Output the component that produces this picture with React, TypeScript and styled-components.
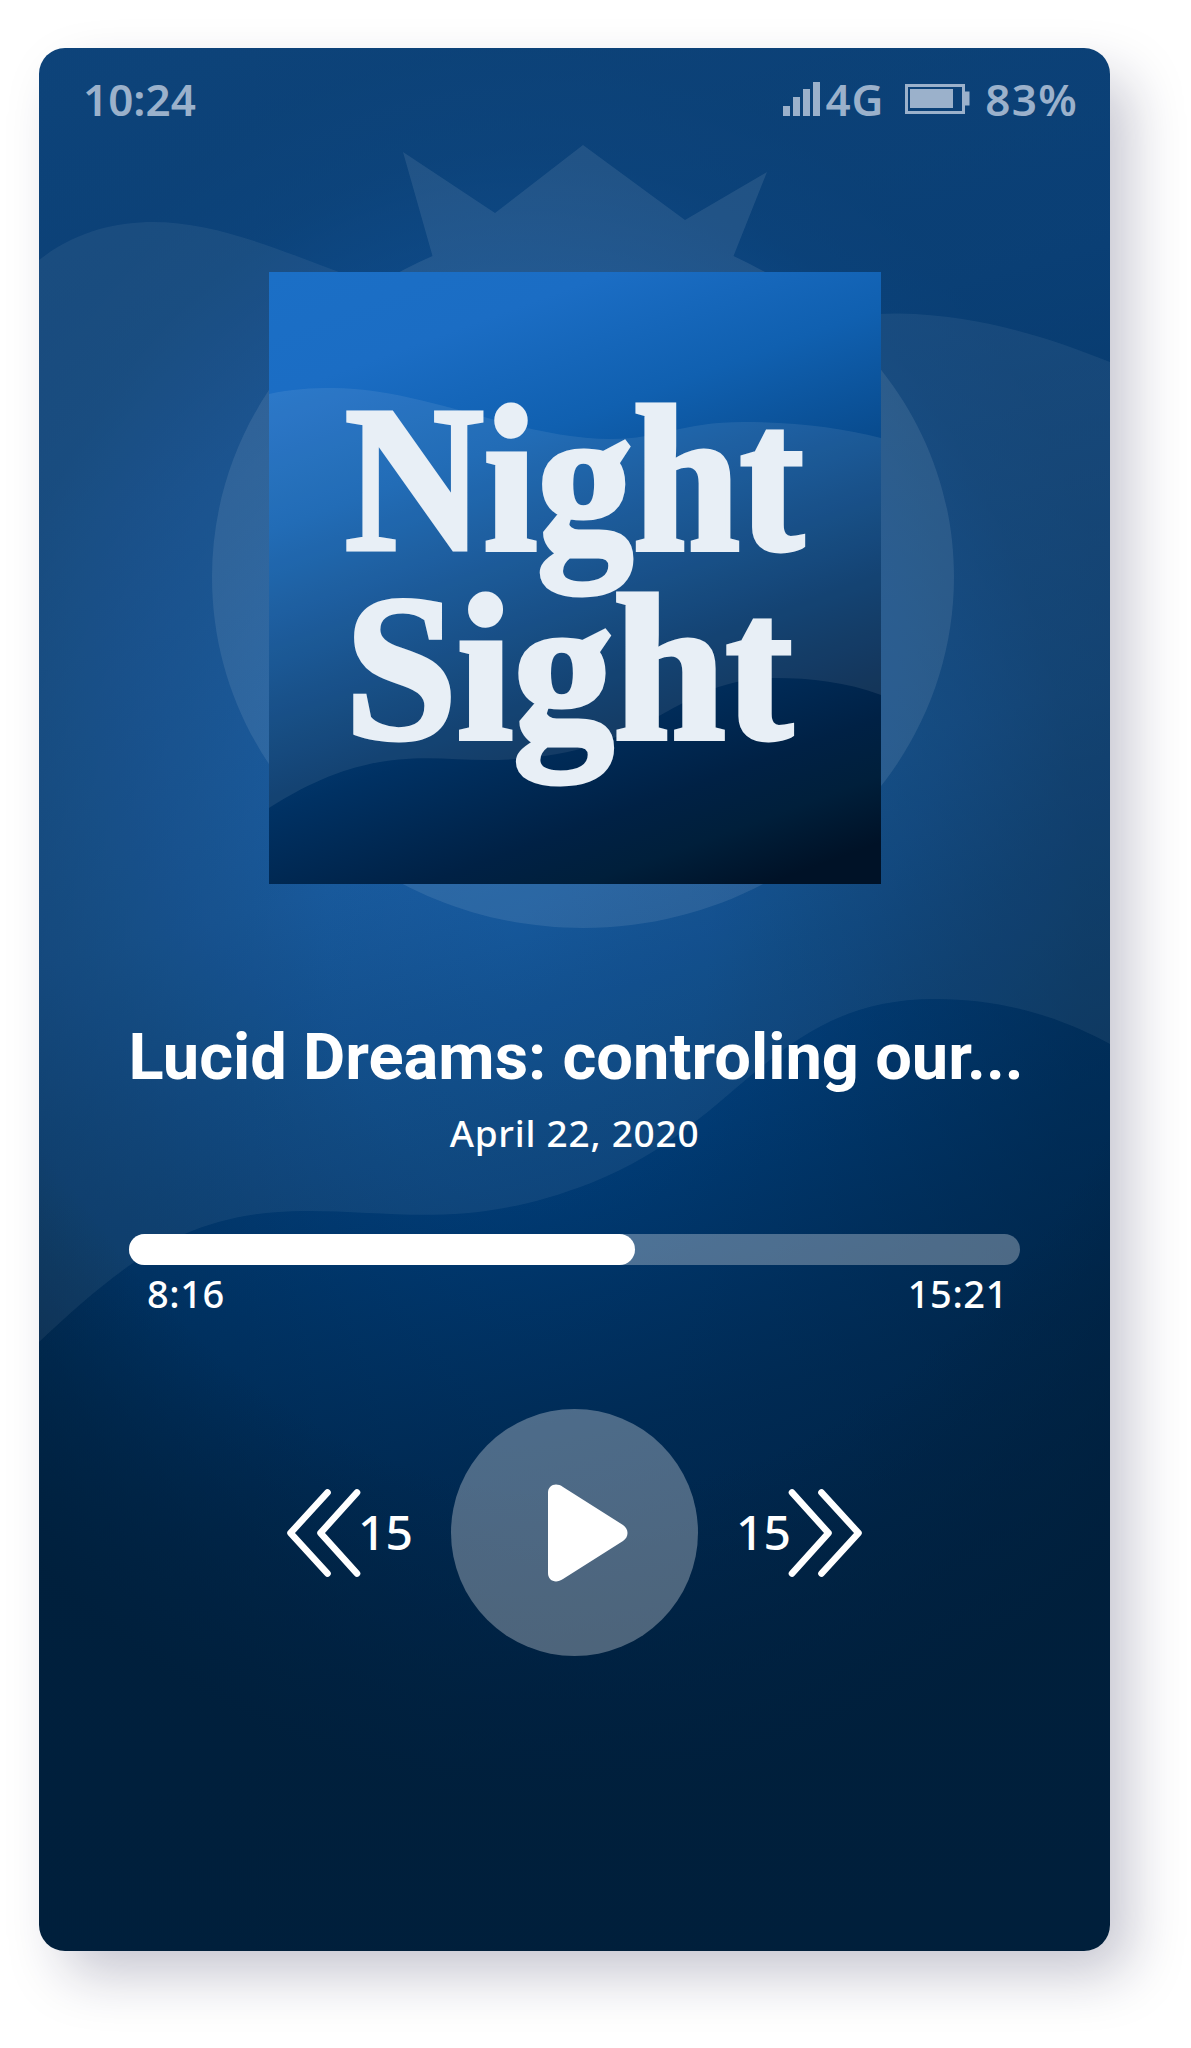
import React from 'react';
import styled, { createGlobalStyle } from 'styled-components';

const GlobalStyle = createGlobalStyle`
  * { box-sizing: border-box; }
  body { margin: 0; background: #fff; }
`;

const Page = styled.main`
  display: flex;
  width: 1191px;
  height: 2048px;
  padding: 48px 0 0 39px;
  overflow: hidden;
  background: #fff;
`;

const Phone = styled.section`
  position: relative;
  isolation: isolate;
  display: flex;
  flex-direction: column;
  align-items: center;
  width: 1071px;
  height: 1903px;
  border-radius: 26px;
  color: #fff;
  background:
    radial-gradient(ellipse 900px 1270px at 535px 480px, rgba(0, 31, 59, 0) 76%, rgba(0, 31, 59, 0.9) 101%),
    radial-gradient(ellipse 640px 880px at 480px 880px, rgba(0, 31, 59, 0) 0%, rgba(0, 31, 59, 0.08) 30%, rgba(0, 31, 59, 0.32) 62%, rgba(0, 31, 59, 0.5) 88%, rgba(0, 31, 59, 0.53) 100%),
    linear-gradient(165deg, #1c6cc0 0%, #1563b6 22%, #0b539d 42%, #04478a 50%, #003b75 60%, #003060 70%, #002852 82%, #001f40 95%);
  box-shadow: 22px 26px 56px -4px rgba(18, 18, 62, 0.25);
`;

const Backdrop = styled.svg`
  position: absolute;
  inset: 0;
  z-index: -1;
  border-radius: 26px;
`;

const StatusBar = styled.header`
  display: flex;
  justify-content: space-between;
  align-items: center;
  width: 100%;
  height: 102px;
  padding: 0 32px 0 44px;
  color: #9bb1cb;
  font: 600 44px/60px 'Noto Sans', 'Open Sans', sans-serif;
`;

const StatusGroup = styled.div`
  display: flex;
  align-items: center;
`;

const StatusText = styled.span<{ $spacing: number; $gap?: number }>`
  letter-spacing: ${(p) => p.$spacing}px;
  margin-left: ${(p) => p.$gap ?? 0}px;
`;

const StatusIcon = styled.svg<{ $gap?: number }>`
  display: block;
  margin-left: ${(p) => p.$gap ?? 0}px;
  fill: currentColor;
`;

const Cover = styled.div`
  position: relative;
  isolation: isolate;
  display: flex;
  flex-direction: column;
  align-items: flex-start;
  width: 612px;
  height: 612px;
  margin-top: 122px;
  padding: 113px 0 0 76px;
  background: linear-gradient(160deg, #1b6fc6 0%, #1b6dc4 15%, #1060b0 31%, #084a8c 47%, #003163 65%, #002145 80%, #001f3b 87%, #001227 95%);
`;

const CoverWaves = styled.svg`
  position: absolute;
  inset: 0;
  z-index: -1;
`;

const CoverLine = styled.span<{ $stretch: number }>`
  display: block;
  height: 189px;
  color: #e8eff6;
  font: 700 208px/189px 'Liberation Serif', serif;
  white-space: nowrap;
  -webkit-text-stroke: 5px #e8eff6;
  transform: scaleX(${(p) => p.$stretch});
  transform-origin: 0 50%;
`;

const Title = styled.h1`
  margin: 133px 0 0;
  padding-left: 3px;
  font: 700 65px/80px Roboto, sans-serif;
  letter-spacing: 0;
  white-space: nowrap;
`;

const ReleaseDate = styled.p`
  margin: 11px 0 0;
  font: 500 37px/50px 'Noto Sans', sans-serif;
  letter-spacing: 0.75px;
  white-space: nowrap;
`;

const Player = styled.div`
  display: flex;
  flex-direction: column;
  width: 891px;
  margin-top: 76px;
`;

const Track = styled.div`
  height: 31px;
  border-radius: 16px;
  background: rgba(255, 255, 255, 0.3);
`;

const Played = styled.div`
  height: 100%;
  border-radius: 16px;
  background: #fff;
`;

const Times = styled.div`
  display: flex;
  justify-content: space-between;
  margin-top: 3px;
  padding: 0 12px 0 18px;
  font: 500 38px/50px 'Noto Sans', sans-serif;
  letter-spacing: 0.6px;
`;

const Controls = styled.div`
  display: flex;
  align-items: center;
  justify-content: center;
  width: 575px;
  margin-top: 91px;
`;

const PlayButton = styled.button`
  display: flex;
  flex: none;
  align-items: center;
  justify-content: center;
  width: 247px;
  height: 247px;
  margin: 0 41px;
  padding: 0 0 0 26px;
  border: 0;
  border-radius: 50%;
  background: rgba(255, 255, 255, 0.3);
`;

const SkipButton = styled.button<{ $forward?: boolean }>`
  display: flex;
  flex: none;
  flex-direction: ${(p) => (p.$forward ? 'row-reverse' : 'row')};
  align-items: center;
  justify-content: flex-start;
  width: 123px;
  padding: 0;
  border: 0;
  background: none;
  color: #fff;
  font: 500 48px/60px 'Noto Sans', sans-serif;
`;

const ChevronIcon = styled.svg`
  flex: none;
  fill: none;
  stroke: #fff;
  stroke-width: 6.6px;
  stroke-linecap: round;
  stroke-linejoin: round;
`;

const SkipAmount = styled.span<{ $forward?: boolean }>`
  flex: none;
  margin: ${(p) => (p.$forward ? '0 -3px 2px 0' : '0 0 2px -3px')};
`;

const Chevrons = ({ forward }: { forward?: boolean }) => (
  <ChevronIcon width="74" height="90" viewBox="0 0 74 90">
    {forward ? (
      <path d="M4 4.500L40.500 45L4 85.500M33.500 4.500L70.500 45L33.500 85.500" />
    ) : (
      <path d="M40.500 4.500L3.500 45L40.500 85.500M70 4.500L33.500 45L70 85.500" />
    )}
  </ChevronIcon>
);

const PhoneBackdrop = () => (
  <Backdrop width="1071" height="1903" viewBox="39 48 1071 1903" aria-hidden="true">
    <path
      fill="#fff"
      fillOpacity="0.06"
      d="M39 260C76 231 116 222 153 222C214 222 275 248 339 272C480 325 540 358 640 356C740 354 800 312 900 313.500C980 315 1050 338 1110 362V1044C1069 1022 1012 999 935 999C774 999 740 1125 591 1183C470 1230 400 1211 306 1211C190 1211 130 1257 39 1342Z"
    />
    <path
      fill="#fff"
      fillOpacity="0.09"
      d="M403 152L495 213L583 145L685 220L767 172L733.500 256C860 314 954 430 954 577C954 771 788 928 583 928C378 928 212 771 212 577C212 435 301 312 432.500 256Z"
    />
  </Backdrop>
);

const progress = 506 / 891;

export default function App() {
  return (
    <>
      <GlobalStyle />
      <Page>
        <Phone>
          <PhoneBackdrop />
          <StatusBar>
            <StatusText $spacing={0}>10:24</StatusText>
            <StatusGroup>
              <StatusIcon width="37" height="34" viewBox="0 0 37 34">
                <path d="M0 24h7v10H0zM10 15h7v19h-7zM20 7h7v27h-7zM30 0h7v34h-7z" />
              </StatusIcon>
              <StatusText $spacing={0.8} $gap={6}>4G</StatusText>
              <StatusIcon $gap={21} width="65" height="30" viewBox="0 0 65 30">
                <path fillRule="evenodd" d="M0 0H60V7.500H64.500V21.500H60V30H0ZM3 3V27H57V3Z" />
                <path d="M5 5H48V24H5Z" />
              </StatusIcon>
              <StatusText $spacing={1.3} $gap={15}>83%</StatusText>
            </StatusGroup>
          </StatusBar>

          <Cover>
            <CoverWaves width="612" height="612" viewBox="0 0 612 612" aria-hidden="true">
              <path
                fill="#fff"
                fillOpacity="0.08"
                d="M0 122C22 117 42 116 64 116C155 116 250 167 342 167C392 167 412 150 474 150C530 150 572 156 612 166V423C577 410 542 406 506 406C400 406 385 488 217 488C160 488 100 472 0 536Z"
              />
            </CoverWaves>
            <CoverLine $stretch={0.923}>Night</CoverLine>
            <CoverLine $stretch={0.968}>Sight</CoverLine>
          </Cover>

          <Title>Lucid Dreams: controling our...</Title>
          <ReleaseDate>April 22, 2020</ReleaseDate>

          <Player>
            <Track>
              <Played style={{ width: `${progress * 100}%` }} />
            </Track>
            <Times>
              <span>8:16</span>
              <span>15:21</span>
            </Times>
          </Player>

          <Controls>
            <SkipButton aria-label="Back 15 seconds">
              <Chevrons />
              <SkipAmount>15</SkipAmount>
            </SkipButton>
            <PlayButton aria-label="Play">
              <svg width="80" height="98" viewBox="0 0 80 98">
                <path fill="#fff" d="M0 9C0 1 8 -2 15 3L75 41C81 45 81 53 75 57L15 95C8 100 0 97 0 89Z" />
              </svg>
            </PlayButton>
            <SkipButton $forward aria-label="Forward 15 seconds">
              <Chevrons forward />
              <SkipAmount $forward>15</SkipAmount>
            </SkipButton>
          </Controls>
        </Phone>
      </Page>
    </>
  );
}
